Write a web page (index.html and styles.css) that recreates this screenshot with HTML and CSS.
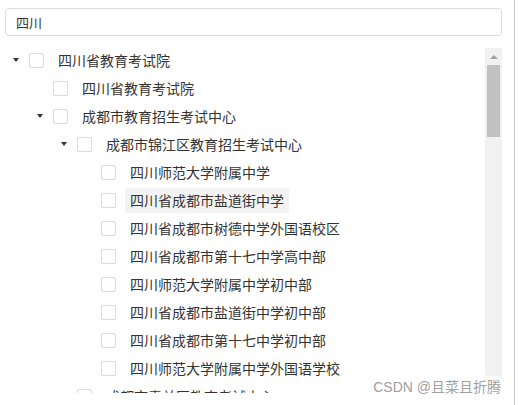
FILE: index.html
```html
<!DOCTYPE html>
<html lang="zh-CN">

<head>
    <meta charset="UTF-8">
    <meta name="viewport" content="width=device-width, initial-scale=1.0">
    <title>机构树</title>
    <link rel="stylesheet" href="styles.css">
</head>

<body>
    <div class="panel">
        <div class="search">
            <input type="text" class="search-input" value="四川">
        </div>

        <div class="tree-box">
            <ul class="tree">
                <li class="node lv0"><span class="arrow open"></span><span class="check"></span><span class="label">四川省教育考试院</span></li>
                <li class="node lv1"><span class="arrow"></span><span class="check"></span><span class="label">四川省教育考试院</span></li>
                <li class="node lv1"><span class="arrow open"></span><span class="check"></span><span class="label">成都市教育招生考试中心</span></li>
                <li class="node lv2"><span class="arrow open"></span><span class="check"></span><span class="label">成都市锦江区教育招生考试中心</span></li>
                <li class="node lv3"><span class="arrow"></span><span class="check"></span><span class="label">四川师范大学附属中学</span></li>
                <li class="node lv3"><span class="arrow"></span><span class="check"></span><span class="label hover">四川省成都市盐道街中学</span></li>
                <li class="node lv3"><span class="arrow"></span><span class="check"></span><span class="label">四川省成都市树德中学外国语校区</span></li>
                <li class="node lv3"><span class="arrow"></span><span class="check"></span><span class="label">四川省成都市第十七中学高中部</span></li>
                <li class="node lv3"><span class="arrow"></span><span class="check"></span><span class="label">四川师范大学附属中学初中部</span></li>
                <li class="node lv3"><span class="arrow"></span><span class="check"></span><span class="label">四川省成都市盐道街中学初中部</span></li>
                <li class="node lv3"><span class="arrow"></span><span class="check"></span><span class="label">四川省成都市第十七中学初中部</span></li>
                <li class="node lv3"><span class="arrow"></span><span class="check"></span><span class="label">四川师范大学附属中学外国语学校</span></li>
                <li class="node lv2"><span class="arrow closed"></span><span class="check"></span><span class="label">成都市青羊区教育考试中心</span></li>
            </ul>

            <div class="scrollbar">
                <div class="scroll-up"></div>
                <div class="scroll-thumb"></div>
            </div>
        </div>

        <div class="watermark">CSDN @且菜且折腾</div>
    </div>
</body>

</html>
```

FILE: styles.css
```css
* {
    box-sizing: border-box;
    font-family: "Noto Sans CJK SC", "Liberation Sans", sans-serif;
}

body {
    margin: 0;
    padding: 0;
    background: #fff;
}

.panel {
    position: relative;
    width: 515px;
    height: 405px;
    border-right: 1px solid #c9c9c9;
}

/* search box */
.search {
    padding: 8px 0 0 5px;
}

.search-input {
    width: 497px;
    height: 28px;
    border: 1px solid #dcdcdc;
    border-radius: 4px;
    padding: 0 10px;
    font-size: 13px;
    color: #333;
    outline: none;
}

/* tree */
.tree-box {
    display: flex;
    margin-top: 10px;
    height: 347px;
}

.tree {
    width: 485px;
    margin: 0;
    padding: 0;
    list-style: none;
    overflow: hidden;
}

.node {
    display: flex;
    align-items: center;
    height: 28px;
}

.lv0 { padding-left: 10px; }
.lv1 { padding-left: 34px; }
.lv2 { padding-left: 58px; }
.lv3 { padding-left: 82px; }

.arrow {
    display: flex;
    justify-content: center;
    align-items: center;
    width: 12px;
    height: 12px;
    margin-right: 7px;
}

.arrow.open::after {
    content: "";
    border-left: 3.5px solid transparent;
    border-right: 3.5px solid transparent;
    border-top: 4px solid #333;
}

.arrow.closed::after {
    content: "";
    border-top: 3.5px solid transparent;
    border-bottom: 3.5px solid transparent;
    border-left: 4px solid #333;
}

.check {
    width: 15px;
    height: 15px;
    border: 1px solid #dadada;
    border-radius: 2px;
    background: #fff;
    margin-right: 9px;
}

.label {
    height: 25px;
    line-height: 25px;
    padding: 0 5px;
    font-size: 14px;
    color: #333;
    white-space: nowrap;
}

.label.hover {
    background: #f3f3f3;
}

/* scrollbar */
.scrollbar {
    width: 17px;
    height: 330px;
    margin-top: 2px;
    background: #f1f1f1;
    display: flex;
    flex-direction: column;
    align-items: center;
}

.scroll-up {
    height: 17px;
    display: flex;
    justify-content: center;
    align-items: center;
}

.scroll-up::after {
    content: "";
    border-left: 4px solid transparent;
    border-right: 4px solid transparent;
    border-bottom: 4px solid #a3a3a3;
}

.scroll-thumb {
    width: 13px;
    height: 72px;
    background: #c1c1c1;
}

.watermark {
    position: absolute;
    right: 13px;
    top: 376px;
    font-family: "Liberation Sans", "Noto Sans CJK SC", sans-serif;
    font-size: 14px;
    color: #a0a0a0;
    background: rgba(255, 255, 255, 0.6);
}
```
